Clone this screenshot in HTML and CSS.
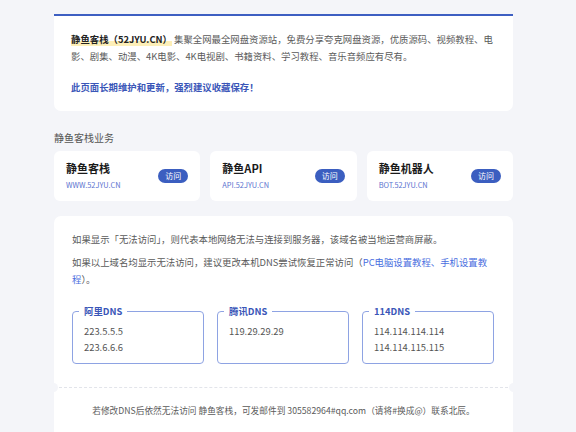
FILE: index.html
```html
<!DOCTYPE html>
<html lang="zh-CN">
<head>
<meta charset="utf-8">
<title>静鱼客栈</title>
<link rel="stylesheet" href="styles.css">
</head>
<body>
<div class="page">
  <section class="intro card">
    <p class="intro-text"><span class="brand">静鱼客栈（52JYU.CN）</span> 集聚全网最全网盘资源站，免费分享夸克网盘资源，优质源码、视频教程、电影、剧集、动漫、4K电影、4K电视剧、书籍资料、学习教程、音乐音频应有尽有。</p>
    <p class="notice">此页面长期维护和更新，强烈建议收藏保存！</p>
  </section>

  <h2 class="section-title">静鱼客栈业务</h2>
  <div class="services">
    <div class="service card">
      <div class="service-info">
        <div class="service-name">静鱼客栈</div>
        <div class="service-url">WWW.52JYU.CN</div>
      </div>
      <a class="visit">访问</a>
    </div>
    <div class="service card">
      <div class="service-info">
        <div class="service-name">静鱼API</div>
        <div class="service-url">API.52JYU.CN</div>
      </div>
      <a class="visit">访问</a>
    </div>
    <div class="service card">
      <div class="service-info">
        <div class="service-name">静鱼机器人</div>
        <div class="service-url">BOT.52JYU.CN</div>
      </div>
      <a class="visit">访问</a>
    </div>
  </div>

  <section class="ticket card">
    <div class="ticket-body">
      <p class="tip">如果显示「无法访问」，则代表本地网络无法与连接到服务器，该域名被当地运营商屏蔽。</p>
      <p class="tip">如果以上域名均显示无法访问，建议更改本机DNS尝试恢复正常访问（<a class="link">PC电脑设置教程、手机设置教程</a>）。</p>
      <div class="dns-list">
        <fieldset class="dns">
          <legend>阿里DNS</legend>
          <div class="dns-ip">223.5.5.5</div>
          <div class="dns-ip">223.6.6.6</div>
        </fieldset>
        <fieldset class="dns">
          <legend>腾讯DNS</legend>
          <div class="dns-ip">119.29.29.29</div>
        </fieldset>
        <fieldset class="dns">
          <legend>114DNS</legend>
          <div class="dns-ip">114.114.114.114</div>
          <div class="dns-ip">114.114.115.115</div>
        </fieldset>
      </div>
    </div>
    <div class="ticket-foot">若修改DNS后依然无法访问 静鱼客栈，可发邮件到 305582964#qq.com（请将#换成@）联系北辰。</div>
  </section>
</div>
</body>
</html>
```

FILE: styles.css
```css
html, body {
  margin: 0;
  padding: 0;
  overflow: hidden;
}
body {
  background: #f4f5f9;
  font-family: "Noto Sans CJK SC", "Noto Sans", sans-serif;
  color: #5a5a5a;
  font-size: 9.4px;
}
.page {
  width: 459px;
  margin-left: 54px;
  padding-top: 14px;
}
.card {
  background: #fff;
  border-radius: 7px;
}
.intro {
  border-top: 2px solid #3d5fc2;
  border-radius: 0 0 7px 7px;
  padding: 15px 17px 15px;
}
.intro p {
  margin: 0;
  line-height: 17px;
}
.brand {
  font-weight: bold;
  color: #222;
  background: linear-gradient(transparent 62%, #fdefb8 62%);
}
.intro .notice {
  margin-top: 14px;
  color: #3a56b8;
  font-weight: bold;
}
.section-title {
  margin: 18px 0 5px;
  font-size: 10px;
  line-height: 17px;
  font-weight: normal;
  color: #555;
}
.services {
  display: grid;
  grid-template-columns: repeat(3, 1fr);
  gap: 10px;
}
.service {
  display: flex;
  align-items: center;
  justify-content: space-between;
  padding: 9px 12px 11px;
  border-radius: 6px;
}
.service-name {
  font-size: 11px;
  line-height: 16px;
  font-weight: bold;
  color: #1a1a1a;
}
.service-url {
  margin-top: 4px;
  font-size: 7.4px;
  line-height: 10px;
  color: #5b73cf;
}
.visit {
  width: 30px;
  height: 14px;
  margin-top: 2px;
  border-radius: 7px;
  background: #3b5ec0;
  color: #fff;
  font-size: 8px;
  line-height: 14px;
  text-align: center;
}
.ticket {
  margin-top: 15px;
  border-radius: 7px 7px 0 0;
}
.ticket-body {
  padding: 15px 19px 23px 18px;
}
.tip {
  margin: 0 0 6px;
  line-height: 17px;
}
.link {
  color: #4a6ee0;
}
.dns-list {
  display: grid;
  grid-template-columns: repeat(3, 1fr);
  gap: 13px;
  margin-top: 17px;
}
.dns {
  margin: 0;
  min-width: 0;
  border: 1px solid #8ea3e3;
  border-radius: 4px;
  padding: 6px 11px 8px;
}
.dns legend {
  margin-left: -5px;
  padding: 0 5px;
  font-weight: bold;
  color: #3a56b8;
  line-height: 12px;
}
.dns-ip {
  line-height: 16px;
  color: #555;
}
.ticket-foot {
  position: relative;
  border-top: 1px dashed #e2e4ea;
  padding: 15px 0 16px;
  text-align: center;
  font-size: 8.7px;
  line-height: 16px;
}
.ticket-foot::before,
.ticket-foot::after {
  content: "";
  position: absolute;
  top: -5px;
  width: 9px;
  height: 9px;
  border-radius: 50%;
  background: #f4f5f9;
}
.ticket-foot::before { left: -5px; }
.ticket-foot::after { right: -5px; }
```
